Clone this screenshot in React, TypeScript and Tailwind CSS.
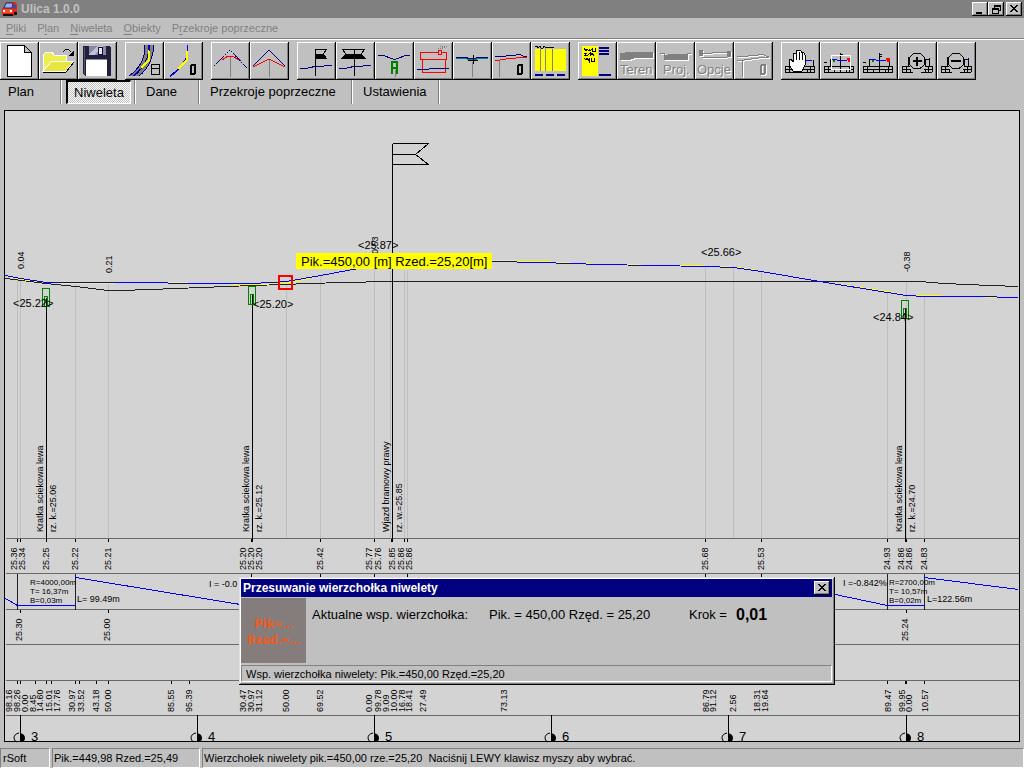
import type { ReactNode } from 'react';

const MENU = [
  { pre: '', key: 'P', post: 'liki' },
  { pre: 'P', key: 'l', post: 'an' },
  { pre: '', key: 'N', post: 'iweleta' },
  { pre: '', key: 'O', post: 'biekty' },
  { pre: 'P', key: 'r', post: 'zekroje poprzeczne' },
];

const RAISED = 'shadow-[inset_-1px_-1px_0_#000,inset_1px_1px_0_#fff,inset_-2px_-2px_0_#808080]';

/* ── Toolbar icons (39 x 38 each) ─────────────────────────────────────────── */

function Disabled({ children }: { children: ReactNode }) {
  return (
    <>
      <g transform="translate(1 1)" stroke="#fff" fill="#fff">{children}</g>
      <g stroke="#808080" fill="#808080">{children}</g>
    </>
  );
}

function IconText({ x, children }: { x: number; children: string }) {
  return (
    <text x={x} y="32" fontSize="13" stroke="none">
      {children}
    </text>
  );
}

function Table({ gap = false }: { gap?: boolean }) {
  return (
    <g stroke="#000">
      {gap ? (
        <path d="M4 24H12M4 27H13M4 30H15M27 24H34M26 27H34M23 30H34M4 24V30M8 24V30M12 27V30M27 27V30M30 24V30M34 24V30M10 24V15M27 24V17M31 24V16" />
      ) : (
        <path d="M4 24H33M4 27H33M4 30H33M4 24V31M8 24V30M14 27V30M20 24V30M26 27V30M29 24V30M33 24V31" />
      )}
    </g>
  );
}

function Road() {
  return (
    <>
      <path d="M20 3C20 17 15 26 4 34H14C23 27 28 17 29 3Z" fill="#808080" />
      <path d="M20 3C20 17 15 26 4 34M29 3C28 17 23 27 14 34M24 3C24 17 19 26 9 34" stroke="#000080" />
      <path d="M24 8V18L16 26" stroke="#ff0" strokeWidth="2" />
      <path d="M24 3V9M15 27L8 34" stroke="#00f" />
      <path d="M26 22H34V32H26ZM26 26H34" stroke="#000" />
    </>
  );
}

const ICONS: Record<string, ReactNode> = {
  Nowy: (
    <>
      <path d="M7 3H24L31 10V34H7Z" fill="#fff" stroke="#000" />
      <path d="M24 3V10H31Z" fill="#c0c0c0" stroke="#000" />
    </>
  ),
  Otwórz: (
    <>
      <path d="M4 29V13L7 10H13L15 13H27V19H13Z" fill="#eeee50" stroke="#fff" />
      <path d="M4 29L13 19H35L27 29Z" fill="#e6e640" stroke="#fff" />
      <path d="M4 30H27L35 20M24 10Q28 5 32 10" stroke="#000" />
      <path d="M35 8V14H29Z" fill="#000" />
    </>
  ),
  Zapisz: (
    <>
      <path d="M5 4H31L33 6V34H7L5 32Z" fill="#20203a" />
      <path d="M11 4H28V13H11Z" fill="#8888a8" />
      <path d="M11 12L20 4H25L16 13H11Z" fill="#c0c0d8" />
      <path d="M20 5H24V12H20Z" fill="#e8e8f8" stroke="#101030" />
      <path d="M8 18H29V34H8Z" fill="#fff" />
      <path d="M8 17H29" stroke="#8888a8" />
      <path d="M6 5V32" stroke="#505070" />
    </>
  ),
  'Oś drogi': <Road />,
  'Zerowanie osi': (
    <>
      <path d="M23 3V9L22 16L17 25L6 34" stroke="#000080" />
      <path d="M23 9V18L14 27" stroke="#ff0" strokeWidth="2" />
      <path d="M23 3V9M14 28L6 35" stroke="#00f" />
      <rect x="27" y="23" width="4" height="9" rx="1" stroke="#000" strokeWidth="2" />
    </>
  ),
  'Łuk niwelety': (
    <>
      <path d="M19 14V35" stroke="#808080" />
      <path d="M3 24L19 8L36 26" stroke="#000080" strokeDasharray="2 1" />
      <path d="M11 18L17 14H21L28 18" stroke="#f00" />
    </>
  ),
  'Wierzchołek niwelety': (
    <>
      <path d="M19 17V35" stroke="#808080" />
      <path d="M3 24L19 8L35 24" stroke="#000080" />
      <path d="M3 25L19 17L35 25" stroke="#f00" />
    </>
  ),
  'Wjazd prawy': (
    <>
      <path d="M3 26H11L20 24H27L35 23" stroke="#000080" />
      <path d="M18 7H30L26 12L29 16H18V12H26" stroke="#000" />
      <path d="M18 12H26L29 16H18Z" fill="#000" />
      <path d="M18 7V34" stroke="#000" />
    </>
  ),
  'Wjazd obustronny': (
    <>
      <path d="M3 26H11L20 24H27L35 23" stroke="#000080" />
      <path d="M6 7H29L25 12L29 16H6L10 12Z" stroke="#000" />
      <path d="M10 12H25L29 16H6Z" fill="#000" />
      <path d="M18 7V34" stroke="#000" />
    </>
  ),
  'Kratka ściekowa': (
    <>
      <path d="M3 13H7L18 17H21L32 13H35" stroke="#000080" />
      <path d="M17 32V20H22V32M17 26H22" stroke="#008000" strokeWidth="2" />
      <path d="M20 28V35" stroke="#808080" />
    </>
  ),
  Budynek: (
    <>
      <path d="M6 10H32V17H6ZM8 17H31V30H8Z" stroke="#f00" />
      <path d="M3 27H15L20 26H35" stroke="#000080" />
      <rect x="24" y="8" width="3" height="4" fill="#c0c0c0" stroke="#f00" />
      <path d="M24 6H30M26 4H34M28 5H32" stroke="#808080" strokeDasharray="1 1" />
    </>
  ),
  'Przekrój w punkcie': (
    <>
      <path d="M19 20V35" stroke="#808080" />
      <path d="M3 16H10L19 18L28 16H35" stroke="#008080" />
      <path d="M3 15H10L19 17L27 15H35" stroke="#000080" />
      <path d="M20 13V22M15 18H25" stroke="#000" />
    </>
  ),
  'Zerowanie niwelety': (
    <>
      <path d="M7 19V35" stroke="#808080" />
      <path d="M3 15L14 14L24 13L27 12L31 14H35" stroke="#000080" />
      <path d="M3 19L14 17L24 16L28 15L35 16" stroke="#f00" />
      <rect x="26" y="23" width="4" height="9" rx="1" stroke="#000" strokeWidth="2" />
    </>
  ),
  Tabela: (
    <>
      <path d="M4 7H35V29H4Z" fill="#ff0" />
      <path d="M9 7V29M14 7V29M21 7V29" stroke="#808080" />
      <path d="M4 4H6L7 6L9 4L10 6H12L13 4L15 6L17 5H20L23 6" stroke="#000" />
      <path d="M4 33H12M15 33H23M26 33H34" stroke="#000080" strokeWidth="2" />
    </>
  ),
  Opis: (
    <>
      <path d="M4 4H20V34H4Z" fill="#ff0" />
      <path d="M6 6L8 9L9 7L11 9L12 7M12 9L14 7V9H17V6M6 11H9L7 13H10L12 11V14L14 11L16 14M6 16L8 18L9 16L11 19V16M13 16V19H16V16" stroke="#000" />
      <path d="M21 6H31M21 9H31M21 12H31M21 33H33" stroke="#000080" strokeWidth="2" />
    </>
  ),
  Teren: (
    <Disabled>
      <path d="M3 12L13 10H35V15H20L14 17H3Z" />
      <IconText x={3}>Teren</IconText>
    </Disabled>
  ),
  Projekt: (
    <Disabled>
      <path d="M4 11H8V17H31V11H35" fill="none" />
      <path d="M8 13H12L18 12H31V17H8Z" />
      <IconText x={7}>Proj.</IconText>
    </Disabled>
  ),
  Opcje: (
    <Disabled>
      <path d="M4 8H7V13H4ZM32 9H35V14H32Z" />
      <path d="M7 11L14 12L20 10H32M7 15H32" fill="none" />
      <IconText x={2}>Opcje</IconText>
    </Disabled>
  ),
  'Zerowanie przekroju': (
    <Disabled>
      <path d="M3 15L14 14L24 13L28 12L32 14H35M3 19L24 16L28 15L35 16M8 19V35" fill="none" />
      <rect x="27" y="23" width="4" height="9" rx="1" fill="none" strokeWidth="2" />
    </Disabled>
  ),
  Przesuń: (
    <>
      <Table />
      <path d="M24 18H31" stroke="#00f" />
      <path d="M32 18V25" stroke="#000" />
      <path
        d="M12 29L8 23V18Q10 16 12 20V12Q13 10 15 12V9Q16 8 18 9V9Q20 8 21 11Q23 10 24 13V23L21 29Z"
        fill="#fff"
        stroke="#000"
      />
      <path d="M15 12V18M18 10V18M21 11V18" stroke="#000" />
    </>
  ),
  'Powiększ okno': (
    <>
      <Table />
      <path d="M10 24V17M20 24V11M30 24V17M4 20H7M20 12H23" stroke="#000" />
      <path d="M11 17H15L17 18H27L29 17" stroke="#00f" />
      <path d="M27 17H31M28 19H31" stroke="#f00" strokeWidth="2" />
      <path d="M13 19H15" stroke="#008000" strokeWidth="2" />
      <path d="M11 13H30V27H11Z" stroke="#fff" />
    </>
  ),
  'Cały rysunek': (
    <>
      <Table />
      <path d="M10 24V17M20 24V11M30 24V17M4 20H7M20 12H23M20 14H23" stroke="#000" />
      <path d="M11 17H15L17 18H27L29 17" stroke="#00f" />
      <path d="M27 17H31M28 19H31" stroke="#f00" strokeWidth="2" />
      <path d="M13 19H15" stroke="#008000" strokeWidth="2" />
    </>
  ),
  Powiększ: (
    <>
      <Table gap />
      <path d="M10 16H12M28 17H31" stroke="#000080" />
      <circle cx="19" cy="19" r="8" stroke="#000" />
      <path d="M15 19H24M19 15V24" stroke="#000" strokeWidth="2" />
    </>
  ),
  Pomniejsz: (
    <>
      <Table gap />
      <path d="M10 16H12M28 17H31" stroke="#000080" />
      <circle cx="19" cy="19" r="8" stroke="#000" />
      <path d="M14 19H24" stroke="#000" strokeWidth="2" />
    </>
  ),
};

const GROUPS = [
  ['Nowy', 'Otwórz', 'Zapisz'],
  ['Oś drogi', 'Zerowanie osi'],
  ['Łuk niwelety', 'Wierzchołek niwelety'],
  ['Wjazd prawy', 'Wjazd obustronny', 'Kratka ściekowa', 'Budynek', 'Przekrój w punkcie', 'Zerowanie niwelety', 'Tabela'],
  ['Opis', 'Teren', 'Projekt', 'Opcje', 'Zerowanie przekroju'],
  ['Przesuń', 'Powiększ okno', 'Cały rysunek', 'Powiększ', 'Pomniejsz'],
];

const DISABLED = ['Teren', 'Projekt', 'Opcje', 'Zerowanie przekroju'];

/* ── Profile data: [baseline x, value] ────────────────────────────────────── */

type Label = [number, string];

const GROUND_LEVELS: Label[] = [
  [17, '25.36'], [25, '25.34'], [49, '25.25'], [78, '25.22'], [111, '25.21'],
  [246, '25.20'], [254, '25.20'], [262, '25.20'], [323, '25.42'], [372, '25.77'],
  [381, '25.76'], [395, '25.85'], [404, '25.86'], [412, '25.86'], [708, '25.68'],
  [764, '25.53'], [890, '24.93'], [904, '24.86'], [912, '24.86'], [927, '24.83'],
];

const DESIGN_LEVELS: Label[] = [[22, '25.30'], [110, '25.00'], [908, '25.24']];

const STATIONS: Label[] = [
  [12, '98.16'], [20, '98.26'], [28, '0.00'], [36, '8.45'], [43, '14.60'],
  [52, '15.01'], [60, '17.76'], [75, '30.97'], [84, '33.52'], [99, '43.18'],
  [111, '50.00'], [174, '85.55'], [192, '95.39'], [246, '30.47'], [254, '30.97'],
  [262, '31.12'], [289, '50.00'], [323, '69.52'], [372, '0.00'], [381, '99.78'],
  [389, '9.09'], [397, '10.00'], [405, '16.78'], [412, '18.41'], [426, '27.49'],
  [507, '73.13'], [709, '86.79'], [716, '91.12'], [736, '2.56'], [760, '18.31'],
  [768, '19.64'], [891, '89.47'], [905, '99.95'], [912, '0.00'], [928, '10.57'],
];

const DIFFERENCES: { x: number; y: number; value: string }[] = [
  { x: 24, y: 269, value: '0.04' },
  { x: 112, y: 273, value: '0.21' },
  { x: 378, y: 254, value: '0.53' },
  { x: 910, y: 272, value: '-0.38' },
];

const VERTICES = [
  { x: 13, y: 307, value: '<25.22>' },
  { x: 253, y: 308, value: '<25.20>' },
  { x: 358, y: 249, value: '<25.87>' },
  { x: 701, y: 256, value: '<25.66>' },
  { x: 873, y: 321, value: '<24.84>' },
];

const OBJECTS = [
  { x: 46, top: 297, name: 'Kratka sciekowa lewa', level: 'rz. k.=25.06' },
  { x: 252, top: 294, name: 'Kratka sciekowa lewa', level: 'rz. k.=25.12' },
  { x: 392, top: 143, name: 'Wjazd bramowy prawy', level: 'rz. w.=25.85' },
  { x: 905, top: 308, name: 'Kratka sciekowa lewa', level: 'rz. k.=24.70' },
];

const GRATES = [{ x: 42, y: 288 }, { x: 248, y: 286 }, { x: 901, y: 300 }];

const HECTOMETRES = [
  { x: 20, n: 3 }, { x: 197, n: 4 }, { x: 374, n: 5 }, { x: 551, n: 6 }, { x: 728, n: 7 }, { x: 906, n: 8 },
];

const ROW_LINES = [538, 573, 609, 644, 680, 715];

const ORDINATES = [
  { x: 17, y: 279 }, { x: 20, y: 279 }, { x: 75, y: 282 }, { x: 108, y: 283 }, { x: 286, y: 283 },
  { x: 320, y: 276 }, { x: 374, y: 266 }, { x: 390, y: 270 }, { x: 404, y: 270 }, { x: 407, y: 270 },
  { x: 705, y: 266 }, { x: 733, y: 267 }, { x: 761, y: 271 }, { x: 887, y: 292 }, { x: 906, y: 281 },
  { x: 924, y: 296 },
];

const TICKS: { y: number; xs: number[] }[] = [
  { y: 538, xs: [17, 20, 46, 75, 108, 251, 252, 320, 374, 391, 404, 407, 705, 761, 887, 905, 906, 924] },
  { y: 573, xs: [251, 320, 374, 407, 705, 761] },
  { y: 609, xs: [20, 108, 906] },
  { y: 680, xs: [17, 20, 35, 46, 51, 75, 79, 96, 108, 171, 189, 887, 905, 906, 924] },
];

function UpText({ x, y, children }: { x: number; y: number; children: string }) {
  return (
    <text transform={`translate(${x} ${y}) rotate(-90)`} fontSize="9">
      {children}
    </text>
  );
}

function Profile() {
  return (
    <svg
      viewBox="5 111 1014 630"
      className="block w-full overflow-visible"
      fill="none"
      role="img"
      aria-label="Profil podłużny niwelety"
      fontFamily='"Liberation Sans", Arial, sans-serif'
    >
      {/* half a unit keeps one-pixel strokes on whole pixels */}
      <g shapeRendering="crispEdges" transform="translate(0.5 0.5)">
        {ORDINATES.map((o) => (
          <path key={o.x} d={`M${o.x} ${o.y}V538`} stroke="#bebebe" />
        ))}
        {ROW_LINES.map((y) => (
          <path key={y} d={`M5 ${y}H1018`} stroke="#696969" />
        ))}
        {TICKS.map((row) =>
          row.xs.map((x) => <path key={`${row.y}-${x}`} d={`M${x} ${row.y}v3`} stroke="#000" />),
        )}

        {/* terrain, parabola and grade line */}
        <path
          d="M5 278L46 283L75 286L108 290H120L150 289L252 285L340 282L392 281H919L944 283L990 285L1018 286"
          stroke="#222"
        />
        <path
          d="M5 275L20 279L46 282L66 283L165 282L252 284L286 283L320 275L374 265L410 260H492L540 261L600 264L680 265L725 266L745 268L761 271L819 281L887 291L906 295L930 295L950 296L1018 297"
          stroke="#ff0"
        />
        <path
          d="M5 275L20 278L46 282H60L165 282L170 283H252L270 282L286 281L320 275L374 265L400 261H492L540 262L600 264L706 266L733 267L761 271L819 281L887 292L906 295L924 296L975 296L1018 297"
          stroke="#00f"
        />

        {OBJECTS.map((o) => (
          <path key={o.x} d={`M${o.x} ${o.top}V541`} stroke="#000" />
        ))}
        {GRATES.map((g) => (
          <path key={g.x} d={`M${g.x} ${g.y}h7v18h-7zM${g.x + 2} ${g.y + 8}h3v10h-3z`} stroke="#008000" />
        ))}
        <path d="M392 143H428L415 154L428 164H392M392 154H415" stroke="#000" />
        <path d="M278 275h14v14h-14zM279 276h12v12h-12z" stroke="#f00" />

        {/* vertical curves row */}
        <path d="M17 573V609M75 573V609M887 573V609M924 573V609" stroke="#222" />
        <path
          d="M5 598L17 605H75M75 577L240 604M830 593L887 605H924M924 577L1018 589"
          stroke="#00f"
        />
      </g>

      <g fill="#000">
        {GROUND_LEVELS.map(([x, v]) => <UpText key={x} x={x} y={570}>{v}</UpText>)}
        {DESIGN_LEVELS.map(([x, v]) => <UpText key={x} x={x} y={641}>{v}</UpText>)}
        {STATIONS.map(([x, v]) => <UpText key={x} x={x} y={712}>{v}</UpText>)}
        {DIFFERENCES.map((d) => <UpText key={d.x} x={d.x} y={d.y}>{d.value}</UpText>)}
        {OBJECTS.map((o) => (
          <g key={o.x}>
            <UpText x={o.x - 3} y={532}>{o.name}</UpText>
            <UpText x={o.x + 10} y={532}>{o.level}</UpText>
          </g>
        ))}
        {VERTICES.map((v) => (
          <text key={v.x} x={v.x} y={v.y} fontSize="11">{v.value}</text>
        ))}
        <g fontSize="8">
          <text x="30" y="585">R=4000,00m</text>
          <text x="30" y="594">T= 16,37m</text>
          <text x="30" y="603">B=0,03m</text>
          <text x="889" y="585">R=2700,00m</text>
          <text x="889" y="594">T= 10,57m</text>
          <text x="889" y="603">B=0,02m</text>
        </g>
        <g fontSize="9">
          <text x="77" y="602">L= 99.49m</text>
          <text x="209" y="587">I = -0.0</text>
          <text x="843" y="586">I =-0.842%</text>
          <text x="927" y="602">L=122.56m</text>
        </g>
      </g>

      {HECTOMETRES.map((h) => (
        <g key={h.n}>
          <path d={`M${h.x} 715v26`} stroke="#000" shapeRendering="crispEdges" />
          <path d={`M${h.x - 1} 733q-5 1 -5 5q0 3 3 4`} stroke="#000" />
          <path d={`M${h.x} 733q5 1 5 5q0 3 -3 4h-2z`} fill="#000" />
          <text x={h.x + 11} y="741" fontSize="13" fill="#000">{h.n}</text>
        </g>
      ))}

      <rect x="296" y="253" width="196" height="16" fill="#ff0" />
      <text x="301" y="266" fontSize="13" fill="#000">Pik.=450,00 [m] Rzed.=25,20[m]</text>
    </svg>
  );
}

/* ── Window parts ─────────────────────────────────────────────────────────── */

function CaptionButton({ label, children }: { label: string; children: ReactNode }) {
  return (
    <button aria-label={label} className={`h-3.5 w-4 shrink-0 bg-[#c0c0c0] ${RAISED}`}>
      <svg viewBox="0 0 16 14" className="block h-3.5 w-4" fill="none" stroke="#000" shapeRendering="crispEdges">
        {children}
      </svg>
    </button>
  );
}

function CloseGlyph() {
  return <path d="M4 3L11 10M5 3L12 10M11 3L4 10M12 3L5 10" />;
}

function VertexDialog() {
  return (
    <section
      role="dialog"
      aria-label="Przesuwanie wierzchołka niwelety"
      className="absolute top-[466px] left-[234px] w-[596px] bg-[#c0c0c0] p-0.5 pr-[3px] pb-[3px] shadow-[inset_-1px_-1px_0_#000,inset_1px_1px_0_#dfdfdf,inset_-2px_-2px_0_#808080,inset_2px_2px_0_#fff]"
    >
      <header className="flex h-[18px] items-center justify-between bg-[#000080] pr-0.5 pl-0.5">
        <h2 className="text-[12px] font-bold text-white">Przesuwanie wierzchołka niwelety</h2>
        <CaptionButton label="Zamknij">
          <CloseGlyph />
        </CaptionButton>
      </header>
      <div className="mt-px flex h-[65px] items-start">
        <div className="flex size-[65px] flex-col items-center justify-center bg-[#857c7c] font-['Open_Sans',sans-serif] text-[13px] leading-4 font-bold text-[#f05a1e]">
          <span>Pik=...</span>
          <span>Rzed.=...</span>
        </div>
        <div className="flex items-center pt-[9px] pl-1.5 text-[13px] leading-4">
          <span className="w-[177px]">Aktualne wsp. wierzchołka:</span>
          <span className="w-[200px]">Pik. = 450,00 Rzęd. = 25,20</span>
          <span className="w-[47px]">Krok =</span>
          <b className="text-[16px]">0,01</b>
        </div>
      </div>
      <footer className="mt-0.5 h-[17px] border border-t-[#808080] border-r-white border-b-white border-l-[#808080] pl-1 text-[11px] leading-4">
        Wsp. wierzchołka niwelety: Pik.=450,00 Rzęd.=25,20
      </footer>
    </section>
  );
}

function Tab({ className, children }: { className: string; children: string }) {
  return (
    <button role="tab" aria-selected={false} className={`flex h-full items-center border-r border-r-white shadow-[inset_-1px_0_0_#808080] ${className}`}>
      {children}
    </button>
  );
}

const PANEL = 'border border-t-[#808080] border-l-[#808080] border-r-white border-b-white whitespace-pre';

export default function App() {
  return (
    <div className="flex min-h-screen w-full flex-col overflow-hidden bg-[#c0c0c0] font-['Liberation_Sans',Arial,sans-serif] text-black">
      {/* Title bar */}
      <header className="flex h-[18px] items-center bg-[#808080] pr-0.5 pl-0.5">
        <svg viewBox="0 0 16 16" className="size-4">
          <path d="M4 1H13L15 3V13L12 15H1L0 12V7L2 6Z" fill="#e02a18" />
          <path d="M4 2H11L10 7H2Z" fill="#8db4ff" stroke="#26336b" />
          <path d="M12 3L14 4V7L11 8Z" fill="#3a4ca0" />
          <path d="M1 8H10V12H1Z" fill="#ff4a28" />
          <path d="M1 10H3M8 10H10" stroke="#fff" strokeWidth="2" />
          <path d="M1 13H11V15H1ZM12 11H15V14H12Z" fill="#111" />
        </svg>
        <h1 className="ml-[3px] text-[12px] font-bold text-[#c0c0c0]">Ulica 1.0.0</h1>
        <div className="ml-auto flex">
          <CaptionButton label="Minimalizuj">
            <path d="M4 10H10M4 11H10" />
          </CaptionButton>
          <CaptionButton label="Przywróć">
            <path d="M6 3H12M6 4H12M6 3V6M12 3V8H10M4 6H10M4 7H10M4 6V11H10V6" />
          </CaptionButton>
          <span className="w-0.5" />
          <CaptionButton label="Zamknij">
            <CloseGlyph />
          </CaptionButton>
        </div>
      </header>

      {/* Menu */}
      <nav className="flex h-[21px] items-center gap-[11px] border-b border-[#808080] pl-1.5 text-[11px] text-[#808080]">
        {MENU.map((m) => (
          <button key={m.key} className="leading-4">
            {m.pre}
            <span className="underline underline-offset-2">{m.key}</span>
            {m.post}
          </button>
        ))}
      </nav>

      {/* Toolbar */}
      <div role="toolbar" className="flex gap-2 border-t border-white pt-0.5">
        {GROUPS.map((group) => (
          <div key={group[0]} className="flex">
            {group.map((name) => (
              <button key={name} aria-label={name} disabled={DISABLED.includes(name)} className={`h-[38px] w-[39px] ${RAISED}`}>
                <svg viewBox="0 0 39 38" className="block h-[38px] w-[39px]" fill="none" shapeRendering="crispEdges">
                  {ICONS[name]}
                </svg>
              </button>
            ))}
          </div>
        ))}
      </div>

      {/* Tabs */}
      <div role="tablist" className="flex h-6 text-[13px]">
        <Tab className="w-[62px] pl-2">Plan</Tab>
        <button
          role="tab"
          aria-selected
          className="ml-1 h-6 w-[65px] border-t-2 border-r border-b border-l-2 border-t-black border-r-white border-b-white border-l-black bg-[repeating-conic-gradient(#fff_0_25%,#c0c0c0_0_50%)] bg-size-[2px_2px] text-center"
        >
          Niweleta
        </button>
        <Tab className="w-[5px]">{''}</Tab>
        <Tab className="w-16 pl-2.5">Dane</Tab>
        <Tab className="w-[153px] pl-2.5">Przekroje poprzeczne</Tab>
        <Tab className="w-[87px] pl-2.5">Ustawienia</Tab>
      </div>

      {/* Drawing */}
      <main className="relative mx-1 mt-1.5 border border-black bg-[#d3d3d3]">
        <Profile />
        <VertexDialog />
      </main>

      {/* Status bar */}
      <footer className="mt-auto flex h-5 gap-0.5 text-[11px] leading-[18px]">
        <span className={`w-[50px] pl-0.5 ${PANEL}`}>rSoft</span>
        <span className={`w-[148px] pl-px ${PANEL}`}>Pik.=449,98 Rzed.=25,49</span>
        <span className={`flex-1 pl-px ${PANEL}`}>
          {'Wierzchołek niwelety pik.=450,00 rze.=25,20  Naciśnij LEWY klawisz myszy aby wybrać.'}
        </span>
      </footer>
    </div>
  );
}
